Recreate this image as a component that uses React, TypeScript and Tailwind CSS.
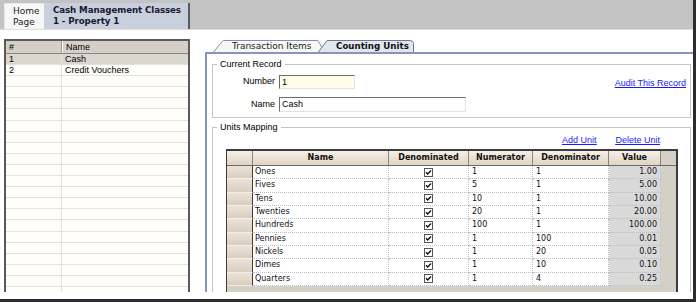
import { Fragment } from "react";

const units = [
    { name: "Ones", num: "1", den: "1", value: "1.00" },
    { name: "Fives", num: "5", den: "1", value: "5.00" },
    { name: "Tens", num: "10", den: "1", value: "10.00" },
    { name: "Twenties", num: "20", den: "1", value: "20.00" },
    { name: "Hundreds", num: "100", den: "1", value: "100.00" },
    { name: "Pennies", num: "1", den: "100", value: "0.01" },
    { name: "Nickels", num: "1", den: "20", value: "0.05" },
    { name: "Dimes", num: "1", den: "10", value: "0.10" },
    { name: "Quarters", num: "1", den: "4", value: "0.25" },
];

const classes = [
    { id: "1", name: "Cash" },
    { id: "2", name: "Credit Vouchers" },
];

function CheckBox() {
    return (
        <svg width="9" height="9" viewBox="0 0 9 9">
            <rect x="0.5" y="0.5" width="8" height="8" fill="#fff" stroke="#555" />
            <path d="M2 4.2 L3.7 6 L7 2.5" fill="none" stroke="#111" strokeWidth="1.4" />
        </svg>
    );
}

function ClassList() {
    const empty = Array.from({ length: 20 });
    return (
        <div className="ml-[4px] mt-[9px] w-[186px] h-[260px] border-l-2 border-r-2 border-t-2 border-[#5a5a5a] bg-[#fffef8] font-['Liberation_Sans',sans-serif] text-[9px] text-black">
            <div className="flex h-[13px] bg-[#d4d0c8] border-b border-[#8a8780] leading-[12px]">
                <div className="w-[56px] pl-[3px] border-r border-[#9c9890]">#</div>
                <div className="flex-1 pl-[3px] border-l border-white">Name</div>
            </div>
            {classes.map((c, i) => (
                <div key={c.id} className={`flex h-[11.1px] leading-[10px] border-b border-[#e4e1da] ${i === 0 ? "bg-[#dad7d1]" : ""}`}>
                    <div className="w-[56px] pl-[3px] border-r border-[#e4e1da]">{c.id}</div>
                    <div className="flex-1 pl-[3px]">{c.name}</div>
                </div>
            ))}
            {empty.map((_, i) => (
                <div key={i} className="flex h-[11.1px] border-b border-[#e4e1da]">
                    <div className="w-[56px] border-r border-[#e4e1da]" />
                    <div className="flex-1" />
                </div>
            ))}
        </div>
    );
}

function Tabs() {
    return (
        <div className="flex h-[12px] ml-[8px] font-['DejaVu_Sans',sans-serif] text-[9px] leading-[12px]">
            <div className="relative w-[112px] h-[12px]">
                <svg className="absolute inset-0" width="112" height="12" viewBox="0 0 112 12">
                    <path d="M0.5 12 L9.5 1.2 Q10.2 0.5 11 0.5 L105 0.5 L111.5 12" fill="#f7f7f7" stroke="#8391ad" />
                </svg>
                <span className="relative pl-[19px] text-[#222]">Transaction Items</span>
            </div>
            <div className="relative ml-[-7px] w-[96px] h-[12px]">
                <svg className="absolute inset-0" width="96" height="12" viewBox="0 0 96 12">
                    <path d="M0.5 12 L9 0.5 L92 0.5 Q95.5 0.5 95.5 3.5 L95.5 12" fill="#e3e6ee" stroke="#6a7898" />
                </svg>
                <span className="relative pl-[18px] font-bold text-[8.7px] text-[#111]">Counting Units</span>
            </div>
        </div>
    );
}

function UnitsGrid() {
    const cols = "grid grid-cols-[26px_136px_80px_64px_76px_52px_14px]";
    const head = "h-[14px] bg-gradient-to-b from-[#f6f0e7] to-[#e0d4c4] border-r border-[#8c8478] flex items-center justify-center font-bold";
    const cell = "h-[13.33px] border-r border-b border-dotted border-[#bdbdbd] flex items-center";
    return (
        <div className="ml-[13px] mt-[3px] w-[452px] h-[160px] border-t-2 border-l border-r-2 border-[#3c3c3c] bg-[#d4d0c8] font-['DejaVu_Sans',sans-serif] text-[8px] text-[#111]">
            <div className={`${cols} border-b border-[#6e6a64]`}>
                <div className={`${head} border-[#3c3c3c]`} />
                <div className={head}>Name</div>
                <div className={head}>Denominated</div>
                <div className={head}>Numerator</div>
                <div className={head}>Denominator</div>
                <div className={head}>Value</div>
                <div className="h-[14px] bg-[#d4d0c8]" />
            </div>
            <div className={cols}>
                {units.map((u) => (
                    <Fragment key={u.name}>
                        <div className="h-[13.33px] bg-gradient-to-b from-[#ece3d8] to-[#d9cdbf] border-b border-[#f3eee7] border-r border-r-[#3c3c3c]" />
                        <div className={`${cell} bg-white pl-[2px]`}>{u.name}</div>
                        <div className={`${cell} bg-white justify-center`}><CheckBox /></div>
                        <div className={`${cell} bg-white pl-[3px]`}>{u.num}</div>
                        <div className={`${cell} bg-white pl-[3px]`}>{u.den}</div>
                        <div className={`${cell} bg-[#d9d9d9] justify-end pr-[3px]`}>{u.value}</div>
                        <div className="h-[13.33px] bg-[#d4d0c8]" />
                    </Fragment>
                ))}
            </div>
        </div>
    );
}

function CountingUnits() {
    return (
        <div className="flex-1 border-t-2 border-l-2 border-[#8795bb] pt-[4px] pl-[5px] pr-[2px] font-['Liberation_Sans',sans-serif] text-[9px] text-black">
            <fieldset className="border border-[#c4c4c4] h-[60px] px-0 pb-[5px]">
                <legend className="ml-[4px] px-[3px] leading-[12px]">Current Record</legend>
                <div className="flex items-center mt-[5px] h-[14px]">
                    <span className="w-[62px] text-right">Number</span>
                    <div className="ml-[4px] w-[76px] h-[14px] bg-[#fffde8] border-t border-l border-t-[#6d6d6d] border-l-[#6d6d6d] border-r border-b border-r-[#e2e2e2] border-b-[#e2e2e2] pl-[2px] leading-[12px]">1</div>
                    <a className="ml-auto mr-[4px] mt-[4px] text-[#1a1aff] underline">Audit This Record</a>
                </div>
                <div className="flex items-center mt-[8px] h-[15px]">
                    <span className="w-[62px] text-right">Name</span>
                    <div className="ml-[4px] w-[187px] h-[15px] bg-white border-t border-l border-t-[#6d6d6d] border-l-[#6d6d6d] border-r border-b border-r-[#e2e2e2] border-b-[#e2e2e2] pl-[2px] leading-[13px]">Cash</div>
                </div>
            </fieldset>
            <fieldset className="mt-[3px] border border-[#c4c4c4] h-[200px]">
                <legend className="ml-[4px] px-[3px] leading-[12px]">Units Mapping</legend>
                <div className="flex justify-end gap-[19px] mt-[1px] pr-[30px] h-[12px] leading-[12px] text-[#1a1aff] underline">
                    <a>Add Unit</a>
                    <a>Delete Unit</a>
                </div>
                <UnitsGrid />
            </fieldset>
        </div>
    );
}

export default function App() {
    return (
        <div className="w-[696px] h-[302px] bg-white border-r-[3px] border-b-[3px] border-[#2c2c2c] flex flex-col overflow-hidden">
            <div className="h-[30px] bg-[#c3c3c3] border-b border-[#e3ddd2] flex items-end pl-[4px] font-['DejaVu_Sans',sans-serif] text-[9px] leading-[11px]">
                <div className="w-[40px] h-[26px] bg-[#f7f7f7] border-t border-l border-[#e6e6e6] pl-[8px] pt-[2px] text-[#222]">
                    Home<br />Page
                </div>
                <div className="w-[146px] h-[26px] bg-[#c8cfdf] border-r-2 border-[#5a5a5a] pl-[9px] pt-[2px] font-bold text-[8.7px] tracking-[-0.1px] text-[#1a1a2a]">
                    Cash Management Classes<br />1 - Property 1
                </div>
            </div>
            <div className="h-[268px] pb-[6px]">
                <div className="h-full flex overflow-hidden">
                    <ClassList />
                    <div className="ml-[15px] flex-1 flex flex-col pt-[10px]">
                        <Tabs />
                        <CountingUnits />
                    </div>
                </div>
            </div>
        </div>
    );
}
